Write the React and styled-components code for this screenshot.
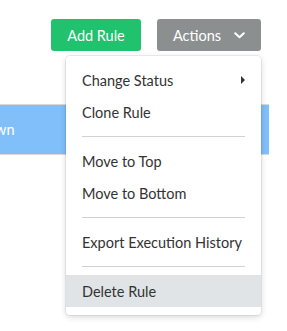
import React from "react";
import styled, { createGlobalStyle } from "styled-components";

const Global = createGlobalStyle`
  html, body { margin: 0; padding: 0; background: #ffffff; }
  body { font-family: Lato, "Open Sans", sans-serif; }
`;

const Page = styled.div`
  width: 287px;
  height: 331px;
  overflow: hidden;
  position: relative;
`;

const Toolbar = styled.div`
  display: flex;
  justify-content: flex-end;
  gap: 16px;
  padding: 19px 26px 0 0;
`;

const Button = styled.button`
  height: 32px;
  border: none;
  border-radius: 3px;
  background: ${(p) => p.$bg};
  color: #ffffff;
  font-family: Lato, "Open Sans", sans-serif;
  font-size: 14.5px;
  padding: 0;
  display: flex;
  align-items: center;
  gap: 13px;
  cursor: pointer;
  width: ${(p) => p.$w}px;
  justify-content: center;
`;

const ActionsWrap = styled.div`
  position: relative;
`;

const Menu = styled.div`
  position: absolute;
  top: calc(100% + 5px);
  right: 0;
  width: 195px;
  background: #ffffff;
  border-radius: 4px;
  box-shadow: 0 0 0 1px rgba(0, 0, 0, 0.06), 0 2px 6px rgba(0, 0, 0, 0.16);
  padding: 8px 0;
  z-index: 2;
`;

const Item = styled.div`
  height: 32px;
  display: flex;
  align-items: center;
  justify-content: space-between;
  padding: 0 16px;
  font-size: 14.5px;
  color: #333333;
  background: ${(p) => (p.$active ? "#e1e4e7" : "transparent")};
`;

const Separator = styled.div`
  height: 1px;
  margin: 8px 16px;
  background: #d2d2d2;
`;

const Caret = styled.span`
  width: 0;
  height: 0;
  border-top: 4px solid transparent;
  border-bottom: 4px solid transparent;
  border-left: 4px solid #333333;
`;

const Table = styled.div`
  margin-top: 53px;
  width: 269px;
`;

const Row = styled.div`
  height: 49px;
  background: #80bffa;
  border-top: 1px solid #d9d9d9;
  border-bottom: 1px solid #d9d9d9;
  display: flex;
  align-items: center;
  overflow: hidden;
`;

const Cell = styled.span`
  color: #ffffff;
  font-size: 14.5px;
  margin-left: -5px;
  white-space: nowrap;
`;

const Chevron = () => (
  <svg width="11" height="7" viewBox="0 0 11 7">
    <polyline points="1.2,1.2 5.5,5.3 9.8,1.2" fill="none" stroke="#ffffff" strokeWidth="2" strokeLinecap="round" strokeLinejoin="round" />
  </svg>
);

export default function App() {
  return (
    <Page>
      <Global />
      <Toolbar>
        <Button $bg="#20c26e" $w={90}>Add Rule</Button>
        <ActionsWrap>
          <Button $bg="#8b8f90" $w={104}>
            Actions <Chevron />
          </Button>
          <Menu>
            <Item>Change Status <Caret /></Item>
            <Item>Clone Rule</Item>
            <Separator />
            <Item>Move to Top</Item>
            <Item>Move to Bottom</Item>
            <Separator />
            <Item>Export Execution History</Item>
            <Separator />
            <Item $active>Delete Rule</Item>
          </Menu>
        </ActionsWrap>
      </Toolbar>
      <Table>
        <Row>
          <Cell>wn</Cell>
        </Row>
      </Table>
    </Page>
  );
}
